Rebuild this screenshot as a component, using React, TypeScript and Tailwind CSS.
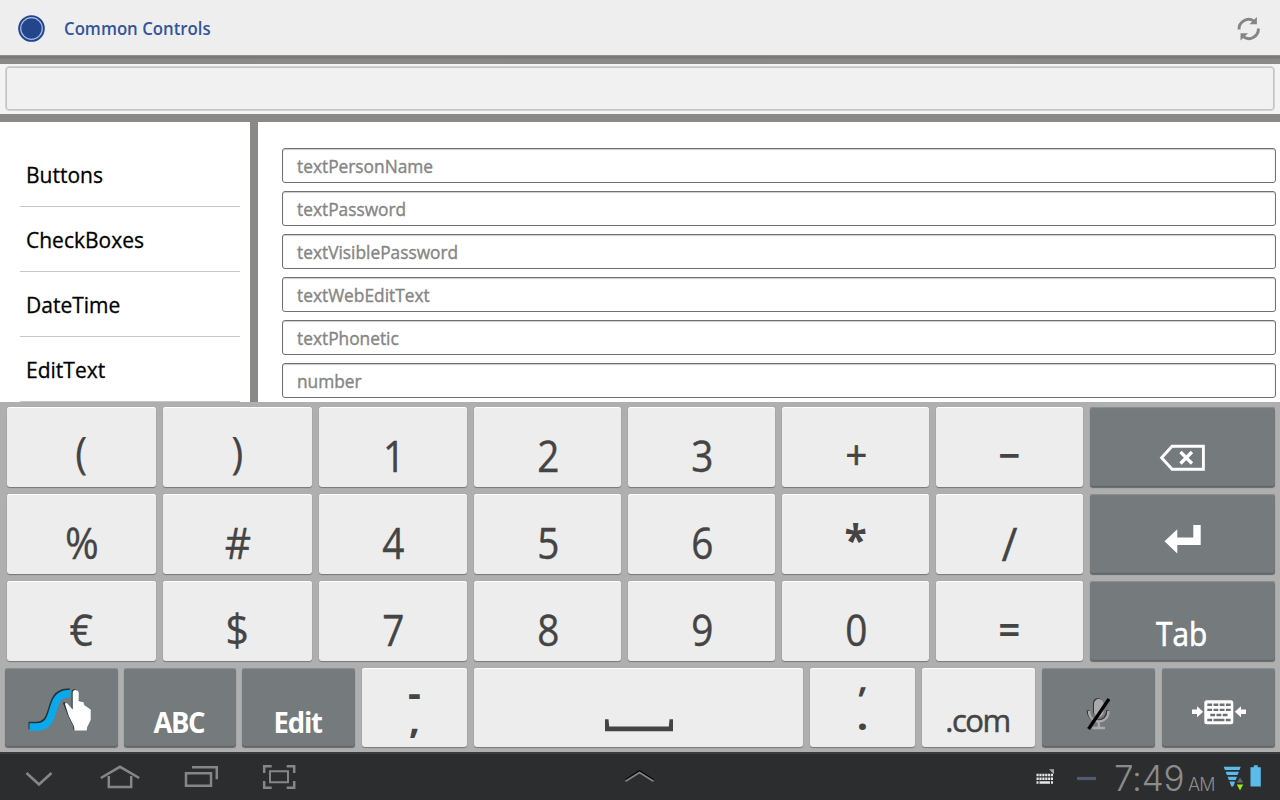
import type { ReactNode } from "react";
import clsx from "clsx";

const sans = "font-[family-name:'Open_Sans','Noto_Sans',sans-serif]";

type KeyProps = {
  width: string;
  dark?: boolean;
  className?: string;
  children?: ReactNode;
};

function Key({ width, dark, className, children }: KeyProps) {
  return (
    <div
      className={clsx(
        "flex h-full shrink-0 justify-center rounded-[3px] whitespace-nowrap",
        dark
          ? "bg-[#757a7c] text-white shadow-[0_1px_1px_#66696a,inset_0_1px_1px_#8b8f90,inset_0_-1px_1px_#606567]"
          : "bg-[#ededed] text-[#444] shadow-[0_1px_1px_#777,0_0_1px_#999,inset_0_1px_0_#fff]",
        width,
        className,
      )}
    >
      {children}
    </div>
  );
}

type DrawingProps = { box: string; size: string; children: ReactNode };

function Drawing({ box, size, children }: DrawingProps) {
  return (
    <svg viewBox={box} className={clsx("shrink-0", size)} fill="none">
      {children}
    </svg>
  );
}

const columnWidths = ["w-[149px]", "w-[149px]", "w-[148px]", "w-[147px]", "w-[147px]", "w-[147px]", "w-[147px]"];

function glyphStyle(label: string) {
  if (label === "1") return "scale-x-90 pl-[3px] pt-7 text-[43px] [-webkit-text-stroke:0.4px_#444]";
  if (label >= "0" && label <= "9") return "scale-x-90 pl-[1px] pt-7 text-[43px] [-webkit-text-stroke:0.4px_#444]";
  if (label === "(" || label === ")") return "scale-x-95 pt-[24px] text-[43px] [-webkit-text-stroke:0.2px_#444]";
  if (label === "*") return "scale-x-95 pt-[25px] text-[43px] font-bold";
  if (label === "/") return "scale-x-95 pt-[28px] text-[46px] [-webkit-text-stroke:0.3px_#444]";
  if (label === "+") return "scale-x-95 pl-[2px] pt-[27px] text-[40px] [-webkit-text-stroke:0.7px_#444]";
  if (label === "−" || label === "=") return "scale-x-90 pt-[27px] text-[43px] font-semibold";
  return "scale-x-95 pt-7 text-[43px] [-webkit-text-stroke:0.3px_#444]";
}

function SymbolRow({ labels, className, action }: { labels: string[]; className: string; action: ReactNode }) {
  return (
    <div className={clsx("flex h-[80px] gap-[7px] pl-[7px]", className)}>
      {labels.map((label, i) => (
        <Key key={label} width={columnWidths[i]}>
          <span className={clsx("origin-center leading-[42px]", glyphStyle(label))}>{label}</span>
        </Key>
      ))}
      {action}
    </div>
  );
}

const fields = ["textPersonName", "textPassword", "textVisiblePassword", "textWebEditText", "textPhonetic", "number"];
const sections = ["Buttons", "CheckBoxes", "DateTime", "EditText"];

function Header() {
  return (
    <header className="flex h-[55px] items-center bg-[#eee] pr-[18px] pl-[17px]">
      <Drawing box="17 14 30 30" size="h-[30px] w-[30px] mt-[3px]">
        <circle cx="31.5" cy="28.5" r="13.3" fill="#23458c" />
        <circle cx="31.5" cy="28.5" r="10.8" stroke="#a9bbe0" strokeWidth="1.2" />
      </Drawing>
      <h1 className="ml-[17px] origin-left scale-x-[0.932] text-[18px] leading-[24px] font-semibold text-[#34549a]">
        Common Controls
      </h1>
      <Drawing box="1235 15 27 27" size="ml-auto mt-[2px] h-[27px] w-[27px]">
        <g stroke="#858585" strokeWidth="2.9">
          <path d="M1239 29.500a9.700 9.700 0 0 1 14.800-8.600" />
          <path d="M1258.400 28.500a9.700 9.700 0 0 1-14.800 8.600" />
        </g>
        <path d="M1256.900 17v7.300h-7.500zM1240.500 40.500v-7.300h7.500z" fill="#858585" />
      </Drawing>
    </header>
  );
}

function Keyboard() {
  return (
    <section className="h-[350px] bg-[#afafaf] pt-[5px]">
      <SymbolRow
        labels={["(", ")", "1", "2", "3", "+", "−"]}
        className=""
        action={
          <Key width="w-[185px]" dark>
            <Drawing box="1158 407 50 80" size="h-[80px] w-[50px]">
              <path d="M1161.600 457.700 1172.100 446.300H1203.400V469.200H1172.100Z" stroke="#fff" strokeWidth="2.900" />
              <path d="m1180.500 452 11.500 11.500m0-11.500-11.500 11.500" stroke="#fff" strokeWidth="3.300" />
            </Drawing>
          </Key>
        }
      />
      <SymbolRow
        labels={["%", "#", "4", "5", "6", "*", "/"]}
        className="mt-[7px]"
        action={
          <Key width="w-[185px]" dark>
            <Drawing box="1158 494 50 80" size="h-[80px] w-[50px]">
              <path
                d="m1164.500 541.300 12.800-12v8.300h16V525h7.400v20h-23.400v8.600z"
                fill="#fff"
              />
            </Drawing>
          </Key>
        }
      />
      <SymbolRow
        labels={["€", "$", "7", "8", "9", "0", "="]}
        className="mt-[7px]"
        action={
          <Key width="w-[185px]" dark>
            <span className="scale-x-[0.93] pt-7 pr-[2px] text-[32px] leading-[50px] [-webkit-text-stroke:0.6px_#fff]">
              Tab
            </span>
          </Key>
        }
      />
      <div className="mt-[7px] flex h-[79px] pl-[5px]">
        <Key width="w-[113px]" dark>
          <Drawing box="24 668 75 79" size="h-[79px] w-[75px]">
            <path d="M28.500 725.500H36C58 725.500 46 693 67 692.300h3" stroke="#24343b" strokeWidth="7.500" />
            <path d="M29.500 727H37C59 727 47 694.500 68 693.800h2.500" stroke="#0aa9ee" strokeWidth="7.500" />
            <path
              d="M72.700 692.500q0-2.500 2.800-2.500t3.200 2.500v8.500l4.600 1 1 3 6.400 4.500v10.500l-3.500 7-.5 3.500H74.500l-.5-4-5.200-10.500-5-12.500 2-.5 6.900 6.500z"
              fill="#24343b"
              transform="translate(-1 -.8)"
            />
            <path
              d="M72.700 692.500q0-2.500 2.800-2.500t3.200 2.500v8.500l4.600 1 1 3 6.400 4.500v10.500l-3.500 7-.5 3.500H74.500l-.5-4-5.200-10.500-4-12.500 2-.5 5.900 6.500z"
              fill="#fff"
            />
          </Drawing>
        </Key>
        <Key width="w-[112px]" dark className="ml-[6px]">
          <span className="scale-x-[0.98] pt-7 pr-[2px] text-[28px] leading-[52px] font-bold tracking-[-1.5px]">
            ABC
          </span>
        </Key>
        <Key width="w-[113px]" dark className="ml-[6px]">
          <span className="scale-x-[0.98] pt-7 pr-[2px] text-[28px] leading-[52px] font-bold tracking-[-1.2px]">
            Edit
          </span>
        </Key>
        <Key width="w-[105px]" className="ml-[7px]">
          <div className="flex flex-col items-center font-bold">
            <span className="pt-[2px] text-[40px] leading-[44px]">-</span>
            <span className="text-[38px] leading-[8px]">,</span>
          </div>
        </Key>
        <Key width="w-[329px]" className="ml-[7px]">
          <Drawing box="603 668 72 79" size="h-[79px] w-[72px]">
            <path d="M605 719.300h3.500l.7 7.300h59.600l.7-7.300h3.500v12h-68z" fill="#444" />
          </Drawing>
        </Key>
        <Key width="w-[105px]" className="ml-[7px]">
          <div className="flex flex-col items-center font-bold">
            <span className="-skew-x-[18deg] pt-[22px] text-[36px] leading-[20px]">'</span>
            <span className="text-[40px] leading-[10px]">.</span>
          </div>
        </Key>
        <Key width="w-[113px]" className="ml-[7px]">
          <span className="pt-6 pr-[2px] text-[31px] leading-[56px] tracking-[-1.5px] [-webkit-text-stroke:0.5px_#444]">
            .com
          </span>
        </Key>
        <Key width="w-[113px]" dark className="ml-[7px]">
          <Drawing box="1083 668 32 79" size="h-[79px] w-[32px]">
            <g transform="translate(-1 -.8)" stroke="#333" fill="none">
              <rect x="1094" y="699" width="9.500" height="18" rx="4.700" fill="#333" stroke="none" />
              <path d="M1089 711c0 14 19.500 14 19.500 0" strokeWidth="2.500" />
            </g>
            <rect x="1094" y="699" width="9.500" height="18" rx="4.700" fill="#aaa" />
            <path d="M1089 711c0 14 19.500 14 19.500 0M1098.800 721v6.500M1092.500 728h12.500" stroke="#aaa" strokeWidth="2.300" />
            <path d="m1088.500 729 20.500-30" stroke="#000" strokeWidth="3.200" />
          </Drawing>
        </Key>
        <Key width="w-[113px]" dark className="ml-[7px]">
          <Drawing box="1190 668 58 79" size="h-[79px] w-[58px]">
            <rect x="1204.300" y="700.300" width="29" height="24" rx="2.500" fill="#fff" />
            <g stroke="#6b7072" strokeWidth="2.400">
              <path d="M1207.300 704.800h23.500M1207.300 709.900h23.500" strokeDasharray="4.800 1.400" />
              <path d="M1210.300 715h17.500" strokeDasharray="4.800 1.400" />
              <path d="M1207.300 720h4.800m1.400 0h10.900m1.400 0h4.800" />
            </g>
            <path
              d="M1192 709.600h5v-3.300l6.200 5.400-6.200 5.500v-3.300h-5zM1246 709.600h-5v-3.300l-6.200 5.400 6.200 5.500v-3.300h5z"
              fill="#fff"
            />
          </Drawing>
        </Key>
      </div>
    </section>
  );
}

function SystemBar() {
  return (
    <footer className="flex h-[48px] border-t-2 border-t-[#3b3c3e] bg-[#2c2d2f] pl-[20px]">
      <Drawing box="20 754 280 46" size="h-[46px] w-[280px]">
        <g stroke="#868686" strokeWidth="2.500">
          <path d="m26.500 773 12.500 11.500 12.500-11.500" strokeWidth="2.700" />
          <path d="m100.800 778 19.200-11.200 19.200 11.200M108.800 776v11h22.400v-11" />
          <path d="M186 773.200h25v12.600h-25zM192 767.200h24.800v12" />
          <path d="M264.200 773v-6.800h7.500m15 0h7.500v6.800m0 8v6.800h-7.500m-15 0h-7.500v-6.800" />
          <path d="M270 771.300h18v11h-18z" strokeWidth="2" />
        </g>
      </Drawing>
      <Drawing box="620 754 40 46" size="ml-[320px] h-[46px] w-[40px]">
        <path d="m625.500 780 14-8.800 14 8.800" stroke="#050505" strokeWidth="2" />
        <path d="m625.500 781.300 14-8.800 14 8.800" stroke="#868686" strokeWidth="1.800" />
      </Drawing>
      <Drawing box="1030 754 75 46" size="ml-[370px] h-[46px] w-[75px]">
        <g stroke="#e6e6e6" strokeWidth="2.500">
          <path d="M1036.500 775h16.500M1036.500 778.700h16.500" strokeDasharray="2.200 0.700" />
          <path d="M1036.500 782.500h2m1 0h10.500m1 0h2" />
        </g>
        <path d="M1049 769.300h5v5z" fill="#aaa" />
        <path d="M1077 778.500h19" stroke="#515b6e" strokeWidth="3.200" />
      </Drawing>
      <div className="ml-[9px] flex w-[104px] items-baseline font-[family-name:Inter,sans-serif] font-light text-[#8b8b8b]">
        <span className="w-[71px] text-[35px] leading-[48px] tracking-[-0.3px]">7:49</span>
        <span className="ml-[3px] text-[18px] tracking-[-0.8px]">AM</span>
      </div>
      <Drawing box="1218 754 50 46" size="h-[46px] w-[50px]">
        <path
          d="M1223.700 766.700h17l-1.200 3.300h-14.600zM1225.600 771.700h13.300l-1.300 3.300h-10.700zM1227.600 776.700h9.400l-1.300 3.300h-6.800zM1229.500 781.500h5.600l-1.800 5h-2z"
          fill="#5dbbe9"
        />
        <path d="m1240 777.500 3.200 5h-6.400z" fill="#666" />
        <path d="M1236.800 784.500h6.400l-3.200 6z" fill="#9bea1c" />
        <path d="M1250.500 767.200h3.300v-2h4v2h3v19.300h-10.300z" fill="#5dbbe9" />
      </Drawing>
    </footer>
  );
}

export default function App() {
  return (
    <div className={clsx("flex h-[800px] w-[1280px] flex-col overflow-hidden bg-white", sans)}>
      <Header />
      <div className="h-[9px] bg-linear-to-b from-[#999] via-[#737372] via-20% to-[#8a8987] to-50%" />
      <div className="h-[50px] bg-[#f4f4f4] pt-[2px] pl-[5px]">
        <div className="h-[45px] w-[1270px] rounded-[4px] border border-[#d2d2d2] bg-[#f1f1f1] shadow-[inset_0_0_0_1px_#c4c4c4]" />
      </div>
      <div className="h-[8px] bg-[#8a8987]" />
      <main className="flex h-[280px] overflow-hidden">
        <nav className="w-[250px] pt-[20px] pl-[20px]">
          {sections.map((name) => (
            <div key={name} className="h-[65px] w-[220px] border-b border-[#c6c6c6] pt-[17px] pl-[6px] text-black">
              <span className="block origin-left scale-x-[0.955] text-[22px] leading-[31px] [-webkit-text-stroke:0.3px_#000]">
                {name}
              </span>
            </div>
          ))}
        </nav>
        <div className="w-[8px] bg-[#8a8987]" />
        <div className="flex flex-col gap-[8px] pt-[26px] pl-[24px]">
          {fields.map((name) => (
            <div
              key={name}
              className="h-[35px] w-[994px] shrink-0 rounded-[3px] border border-[#707070] pl-[14px] shadow-[inset_0_1px_1px_#ccc]"
            >
              <span className="block origin-left scale-x-[0.962] text-[18px] leading-[34px] text-[#868686] [-webkit-text-stroke:0.4px_#868686]">
                {name}
              </span>
            </div>
          ))}
        </div>
      </main>
      <Keyboard />
      <SystemBar />
    </div>
  );
}
